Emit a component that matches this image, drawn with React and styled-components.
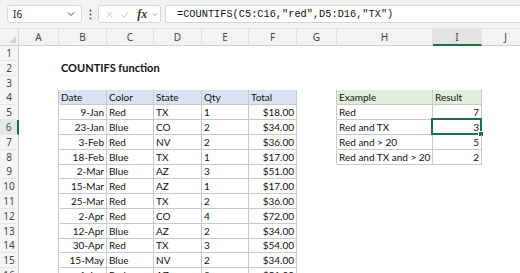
import styled, { createGlobalStyle } from "styled-components";

const GlobalStyle = createGlobalStyle`
  html, body {
    margin: 0;
    padding: 0;
    background: #ffffff;
    overflow: hidden;
  }
  body {
    font-family: "Lato", "Liberation Sans", sans-serif;
  }
`;

const GREEN = "#1e7145";
const TABLE_LINE = "#c9c9c9";

const COLS = [
  { key: "A", w: 40 },
  { key: "B", w: 48 },
  { key: "C", w: 47 },
  { key: "D", w: 48 },
  { key: "E", w: 47 },
  { key: "F", w: 48 },
  { key: "G", w: 40 },
  { key: "H", w: 96 },
  { key: "I", w: 49 },
  { key: "J", w: 48 },
];

const TEMPLATE = `19px ${COLS.map((c) => c.w + "px").join(" ")}`;

const Window = styled.div`
  width: 520px;
  height: 273px;
  display: flex;
  flex-direction: column;
  overflow: hidden;
  background: #ffffff;
`;

/* ---------- formula bar ---------- */

const FormulaBar = styled.div`
  height: 28px;
  flex: none;
  display: flex;
  align-items: center;
  padding-left: 7px;
  background: #f3f3f3;
  box-sizing: border-box;
`;

const Box = styled.div`
  height: 18px;
  box-sizing: border-box;
  background: #ffffff;
  border: 1px solid #d6d6d6;
  border-radius: 3px;
  display: flex;
  align-items: center;
`;

const NameBox = styled(Box)`
  width: 75px;
  padding: 0 6px 0 5px;
  justify-content: space-between;
  font-family: "Noto Sans", "Liberation Sans", sans-serif;
  font-size: 10px;
  color: #222;
`;

const Dots = styled.div`
  width: 16px;
  display: flex;
  justify-content: center;
`;

const FuncBox = styled(Box)`
  width: 63px;
  padding: 0 2px 0 7px;
  gap: 8px;
`;

const Fx = styled.span`
  font-family: "Liberation Serif", serif;
  font-style: italic;
  font-weight: bold;
  font-size: 12px;
  color: #333;
  margin-right: -3px;
`;

const FormulaInput = styled(Box)`
  flex: 1;
  margin-left: 4px;
  border-right: none;
  border-radius: 3px 0 0 3px;
  padding-left: 11px;
  font-family: "Liberation Mono", "DejaVu Sans Mono", monospace;
  font-size: 10.3px;
  color: #111;
  white-space: nowrap;
`;

const Chevron = ({ size = 7, color = "#444" }) => (
  <svg width={size} height={size} viewBox="0 0 8 8">
    <polyline points="1,2.5 4,5.5 7,2.5" fill="none" stroke={color} strokeWidth="1" />
  </svg>
);

/* ---------- sheet ---------- */

const Sheet = styled.div`
  flex: 1;
  display: flex;
  flex-direction: column;
  overflow: hidden;
`;

const Row = styled.div`
  display: grid;
  grid-template-columns: ${TEMPLATE};
  height: ${(p) => p.$h}px;
  flex: none;
`;

const Corner = styled.div`
  background: #f3f3f3;
  border-right: 1px solid #dadada;
  border-bottom: 1px solid #d2d2d2;
  border-top: 1px solid #e4e4e4;
  box-sizing: border-box;
  display: flex;
  align-items: flex-end;
  justify-content: flex-end;
  padding: 0 2px 2px 0;
`;

const ColHead = styled.div`
  box-sizing: border-box;
  background: ${(p) => (p.$active ? "#e3e3e3" : "#f3f3f3")};
  border-top: 1px solid #e4e4e4;
  border-bottom: ${(p) => (p.$active ? `2px solid ${GREEN}` : "1px solid #d2d2d2")};
  border-right: 1px solid #e0e0e0;
  font-family: "Noto Sans", "Liberation Sans", sans-serif;
  font-size: 10px;
  color: #444;
  display: flex;
  align-items: center;
  justify-content: center;
  padding-top: ${(p) => (p.$active ? "1px" : "0")};
`;

const RowHead = styled.div`
  box-sizing: border-box;
  background: ${(p) => (p.$active ? "#e6e6e6" : "#f5f5f5")};
  border-right: ${(p) => (p.$active ? `2px solid ${GREEN}` : "1px solid #d2d2d2")};
  border-bottom: 1px solid #e6e6e6;
  font-family: "Noto Sans", "Liberation Sans", sans-serif;
  font-size: 10px;
  color: ${(p) => (p.$active ? GREEN : "#444")};
  display: flex;
  align-items: center;
  justify-content: center;
`;

const Cell = styled.div`
  position: relative;
  box-sizing: border-box;
  background: ${(p) => p.$fill || "transparent"};
  border-right: 1px solid ${(p) => p.$rb || "transparent"};
  border-bottom: 1px solid ${(p) => p.$bb || "transparent"};
  padding: 0 2px;
  font-size: ${(p) => (p.$bold ? "11px" : "10px")};
  font-weight: ${(p) => (p.$bold ? 700 : 400)};
  color: #111;
  display: flex;
  align-items: center;
  justify-content: ${(p) => (p.$right ? "flex-end" : "flex-start")};
  white-space: nowrap;
  overflow: visible;
  line-height: 1;
`;

const Selection = styled.div`
  position: absolute;
  left: -2px;
  top: -2px;
  right: -1px;
  bottom: -1px;
  border: 2px solid ${GREEN};
  pointer-events: none;
`;

const FillHandle = styled.div`
  position: absolute;
  right: -4px;
  bottom: -4px;
  width: 4px;
  height: 4px;
  background: ${GREEN};
  border: 1px solid #ffffff;
`;

/* ---------- data ---------- */

const sales = [
  ["9-Jan", "Red", "TX", "1", "$18.00"],
  ["23-Jan", "Blue", "CO", "2", "$34.00"],
  ["3-Feb", "Red", "NV", "2", "$36.00"],
  ["18-Feb", "Blue", "TX", "1", "$17.00"],
  ["2-Mar", "Blue", "AZ", "3", "$51.00"],
  ["15-Mar", "Red", "AZ", "1", "$17.00"],
  ["25-Mar", "Red", "TX", "2", "$36.00"],
  ["2-Apr", "Red", "CO", "4", "$72.00"],
  ["12-Apr", "Blue", "AZ", "2", "$34.00"],
  ["30-Apr", "Red", "TX", "3", "$54.00"],
  ["15-May", "Blue", "NV", "2", "$34.00"],
  ["1-Jun", "Red", "AZ", "3", "$51.00"],
];

const examples = [
  ["Red", "7"],
  ["Red and TX", "3"],
  ["Red and > 20", "5"],
  ["Red and TX and > 20", "2"],
];

// cells keyed by "row:colIndex" (colIndex 0 = A)
const cells = {};
cells["2:1"] = { v: "COUNTIFS function", bold: true };
["Date", "Color", "State", "Qty", "Total"].forEach((h, i) => {
  cells[`4:${i + 1}`] = { v: h, fill: "#dae3f3" };
});
sales.forEach((r, ri) => {
  r.forEach((v, ci) => {
    cells[`${ri + 5}:${ci + 1}`] = { v, right: ci === 0 || ci === 4 };
  });
});
cells["4:7"] = { v: "Example", fill: "#e2efda" };
cells["4:8"] = { v: "Result", fill: "#e2efda" };
examples.forEach(([a, b], i) => {
  cells[`${i + 5}:7`] = { v: a };
  cells[`${i + 5}:8`] = { v: b, right: true };
});

const inTable = (r, c) =>
  (r >= 4 && r <= 16 && c >= 1 && c <= 5) || (r >= 4 && r <= 8 && c >= 7 && c <= 8);

const ACTIVE_ROW = 6;
const ACTIVE_COL = 8;
const ROW_H = 14.8;

function FormulaRow() {
  return (
    <FormulaBar>
      <NameBox>
        <span>I6</span>
        <Chevron size={8} />
      </NameBox>
      <Dots>
        <svg width="3" height="11" viewBox="0 0 3 11">
          <circle cx="1.5" cy="1.5" r="1" fill="#555" />
          <circle cx="1.5" cy="5.5" r="1" fill="#555" />
          <circle cx="1.5" cy="9.5" r="1" fill="#555" />
        </svg>
      </Dots>
      <FuncBox>
        <svg width="9" height="9" viewBox="0 0 9 9">
          <path d="M1 1 L8 8 M8 1 L1 8" stroke="#b5b5b5" strokeWidth="0.9" fill="none" />
        </svg>
        <svg width="10" height="9" viewBox="0 0 10 9">
          <polyline points="1,5 3.6,7.8 9,1.2" stroke="#b5b5b5" strokeWidth="0.9" fill="none" />
        </svg>
        <Fx>fx</Fx>
        <Chevron size={7} color="#777" />
      </FuncBox>
      <FormulaInput>=COUNTIFS(C5:C16,"red",D5:D16,"TX")</FormulaInput>
    </FormulaBar>
  );
}

export default function App() {
  const rows = [];
  for (let r = 1; r <= 16; r++) rows.push(r);

  return (
    <Window>
      <GlobalStyle />
      <FormulaRow />
      <Sheet>
        <Row $h={18}>
          <Corner>
            <svg width="7" height="7" viewBox="0 0 7 7">
              <polygon points="7,0 7,7 0,7" fill="#d0d0d0" />
            </svg>
          </Corner>
          {COLS.map((c, i) => (
            <ColHead key={c.key} $active={i === ACTIVE_COL}>
              {c.key}
            </ColHead>
          ))}
        </Row>
        {rows.map((r) => (
          <Row key={r} $h={ROW_H}>
            <RowHead $active={r === ACTIVE_ROW}>{r}</RowHead>
            {COLS.map((c, ci) => {
              const cell = cells[`${r}:${ci}`];
              const here = inTable(r, ci);
              const rb = here || inTable(r, ci + 1) ? TABLE_LINE : null;
              const bb = here || inTable(r + 1, ci) ? TABLE_LINE : null;
              const selected = r === ACTIVE_ROW && ci === ACTIVE_COL;
              return (
                <Cell
                  key={c.key}
                  $fill={cell && cell.fill}
                  $bold={cell && cell.bold}
                  $right={cell && cell.right}
                  $rb={rb}
                  $bb={bb}
                >
                  {cell ? cell.v : null}
                  {selected && (
                    <Selection>
                      <FillHandle />
                    </Selection>
                  )}
                </Cell>
              );
            })}
          </Row>
        ))}
      </Sheet>
    </Window>
  );
}
